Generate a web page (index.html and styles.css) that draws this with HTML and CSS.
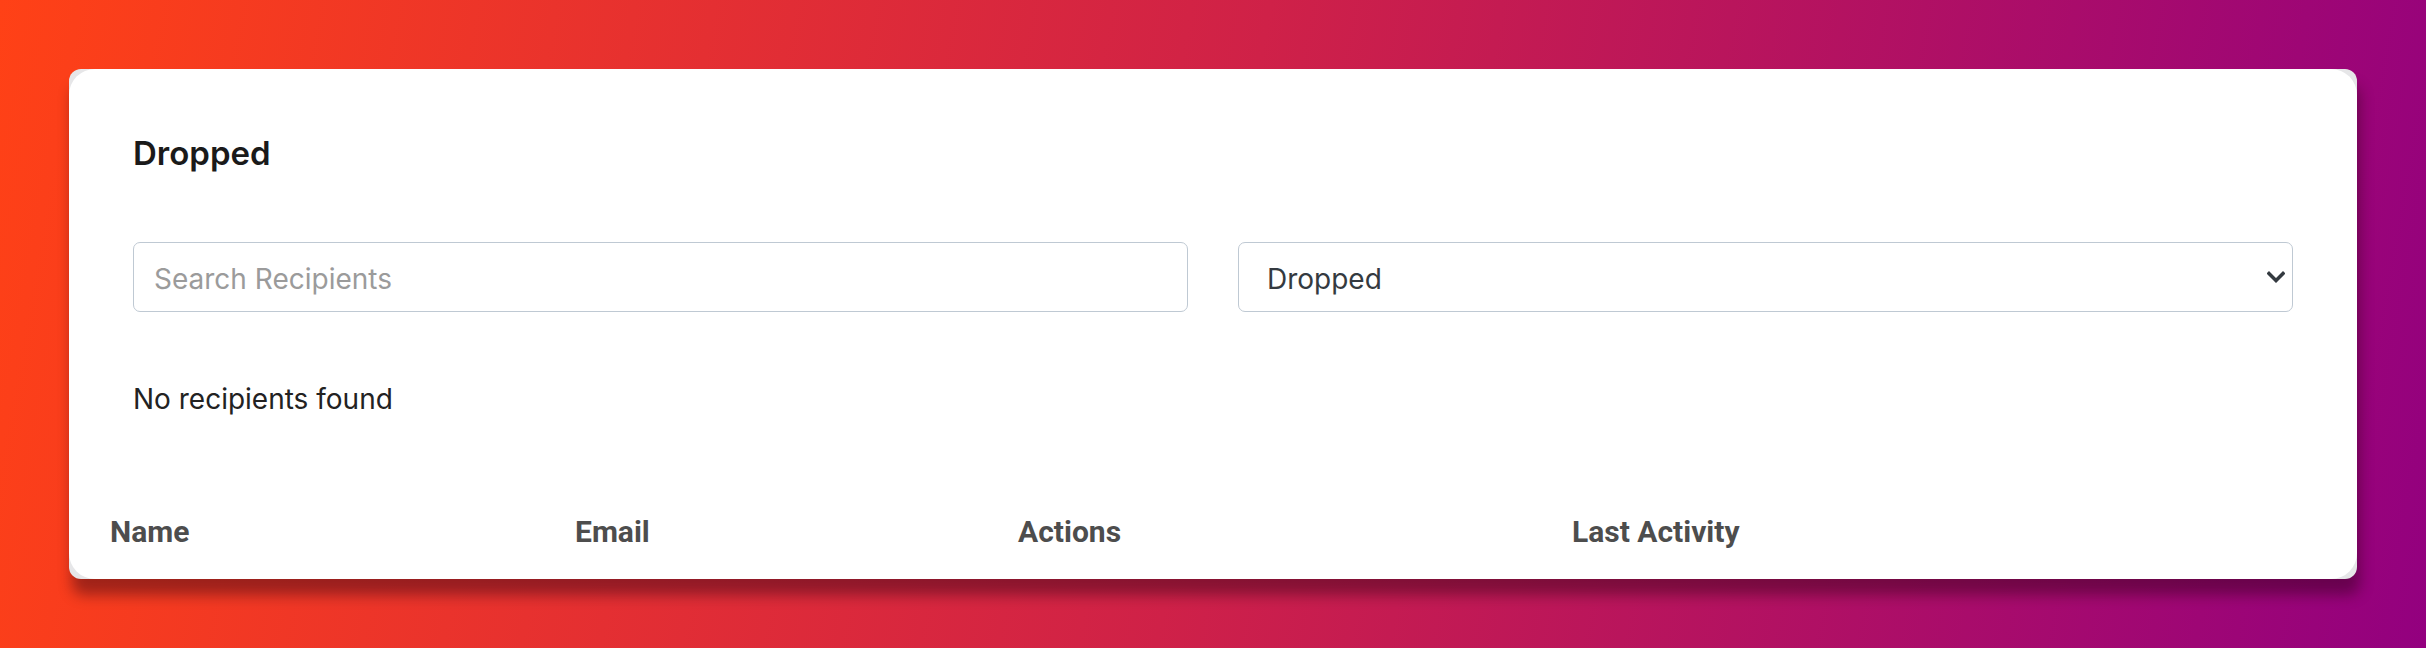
FILE: index.html
```html
<!DOCTYPE html>
<html lang="en">
<head>
<meta charset="utf-8">
<title>Dropped</title>
<link rel="stylesheet" href="styles.css">
</head>
<body>
<main class="page">
  <section class="card">
    <div class="card-inner">
      <div class="card-body">
        <h2 class="title">Dropped</h2>
        <div class="filters">
          <input class="field search" type="text" placeholder="Search Recipients">
          <div class="select-wrap">
            <select class="field select">
              <option>Dropped</option>
            </select>
            <svg class="chevron" width="18" height="12" viewBox="0 0 18 12" aria-hidden="true">
              <polyline points="2,2.5 9,9.5 16,2.5" fill="none" stroke="#343a40" stroke-width="3.4" stroke-linecap="square" stroke-linejoin="miter"/>
            </svg>
          </div>
        </div>
        <p class="empty">No recipients found</p>
      </div>
      <div class="table-head">
        <div class="th">Name</div>
        <div class="th">Email</div>
        <div class="th">Actions</div>
        <div class="th">Last Activity</div>
      </div>
    </div>
  </section>
</main>
</body>
</html>
```

FILE: styles.css
```css
html, body {
  margin: 0;
  padding: 0;
}

body {
  width: 2426px;
  height: 648px;
  overflow: hidden;
  background: linear-gradient(100deg, #ff4116 0%, #cf2148 50%, #93007f 100%);
  font-family: "Inter", "Noto Sans", sans-serif;
}

.page {
  padding: 69px 69px 0 69px;
}

.card {
  background: #e6e6e8;
  border-radius: 12px;
  box-shadow: 3px 16px 14px rgba(40, 0, 20, 0.42);
}

.card-inner {
  background: #ffffff;
  border-radius: 26px;
}

.card-body {
  padding: 66px 64px 0 64px;
  display: flex;
  flex-direction: column;
}

.title {
  margin: 0;
  font-size: 33px;
  line-height: 36px;
  font-weight: 600;
  color: #1a1a1a;
}

.filters {
  margin-top: 71px;
  display: grid;
  grid-template-columns: 1fr 1fr;
  gap: 50px;
}

.field {
  box-sizing: border-box;
  width: 100%;
  height: 70px;
  border: 1px solid #bfc9d3;
  border-radius: 7px;
  background: #ffffff;
  font-family: "Inter", "Noto Sans", sans-serif;
  font-size: 28px;
  outline: none;
  margin: 0;
}

.search {
  padding: 3px 20px 0 20px;
  color: #222;
}

.search::placeholder {
  color: #9b9b9b;
  opacity: 1;
}

.select-wrap {
  position: relative;
}

.select {
  -webkit-appearance: none;
  appearance: none;
  padding: 3px 60px 0 28px;
  color: #343a40;
}

.chevron {
  position: absolute;
  right: 8px;
  top: 29px;
  pointer-events: none;
}

.empty {
  margin: 67px 0 0 0;
  font-size: 28px;
  line-height: 40px;
  color: #222222;
}

.table-head {
  margin-top: 95px;
  padding: 0 25px 30px 25px;
  display: grid;
  grid-template-columns: 465px 443px 554px 1fr;
}

.th {
  padding: 0 16px;
  font-family: "Roboto", "Liberation Sans", sans-serif;
  font-weight: 700;
  font-size: 30px;
  line-height: 35px;
  color: #4d4d4d;
}
```
